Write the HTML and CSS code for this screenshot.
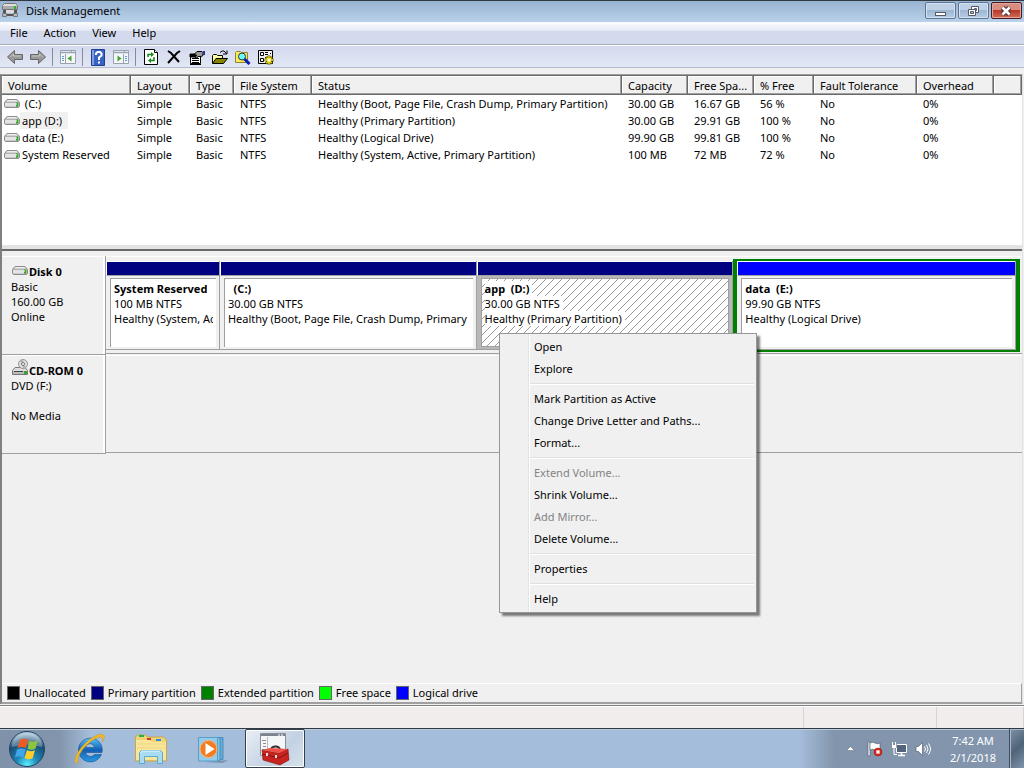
FILE: index.html
```
<!DOCTYPE html>
<html lang="en">
<head>
    <meta charset="UTF-8">
    <meta name="viewport" content="width=device-width, initial-scale=1.0">
    <title>Disk Management</title>
    <link rel="stylesheet" href="styles.css">
</head>
<body>
    <svg class="defs" aria-hidden="true">
        <defs>
            <linearGradient id="driveTop" x1="0" y1="0" x2="0" y2="1">
                <stop offset="0" stop-color="#fff"/>
                <stop offset="1" stop-color="#b4b4b4"/>
            </linearGradient>
            <symbol id="drive" viewBox="0 0 16 9">
                <path d="M3 .5h10l2.500 3v4l-1 1h-13l-1-1v-4z" fill="#b0b0b0" stroke="#8c8c8c"/>
                <path d="M3.500 1h9l2 2.500h-13z" fill="url(#driveTop)"/>
                <path d="M1 4h11v3.500h-10.500l-.5-.5z" fill="#e4e4e4"/>
                <path d="M12 3.500h2v4h-2z" fill="#2fa82f"/>
                <path d="M12 4h1v2h-1z" fill="#80e860"/>
            </symbol>
        </defs>
    </svg>

    <div class="window">
        <header class="titlebar">
            <svg class="app-icon" width="18" height="16" viewBox="0 0 18 16">
                <path d="M3.500 1.500h11l2 2v4h-15v-4z" fill="#ddd" stroke="#777"/>
                <path d="M2 4h14v3h-14z" fill="#aaa"/>
                <path d="M13 4h2v3h-2z" fill="#28b428"/>
                <path d="M2 8h14v3h-14z" fill="#555"/>
                <path d="M5 8h8v3h-8z" fill="#ddd"/>
                <path d="M1.500 11.500h4v3h-4zM12.500 11.500h4v3h-4z" fill="#bbb" stroke="#777"/>
                <path d="M6 12h6v2h-6z" fill="#555"/>
            </svg>
            <h1>Disk Management</h1>
            <div class="win-buttons">
                <button aria-label="Minimize">
                    <svg width="28" height="14" viewBox="0 0 28 14"><rect x="9.500" y="8.500" width="10" height="3" fill="#fff" stroke="#555a66"/></svg>
                </button>
                <button aria-label="Restore">
                    <svg width="28" height="14" viewBox="0 0 28 14"><path d="M12.500 2.500h7v6h-7z" fill="#fff" stroke="#555a66"/><path d="M15.500 4.500h2v2h-2z" fill="#a5bdd8" stroke="#555a66"/><path d="M9.500 5.500h7v6h-7z" fill="#fff" stroke="#555a66"/><path d="M11.500 7.500h3v2h-3z" fill="#a5bdd8" stroke="#555a66"/></svg>
                </button>
                <button class="close" aria-label="Close">
                    <svg width="28" height="14" viewBox="0 0 28 14"><path d="M10.500 3.500l7 7m0-7l-7 7" stroke="#52353a" stroke-width="5"/><path d="M10.500 3.500l7 7m0-7l-7 7" stroke="#fff" stroke-width="2.600"/></svg>
                </button>
            </div>
        </header>

        <nav class="menubar">
            <button>File</button>
            <button>Action</button>
            <button>View</button>
            <button>Help</button>
        </nav>

        <div class="toolbar">
            <button aria-label="Back"><svg width="18" height="16" viewBox="0 0 18 16"><path d="M1.500 8l7-6.500v4h8v5h-8v4z" fill="#999" stroke="#666"/><path d="M4 8l3.500-3v2h7.500" fill="none" stroke="#c4c4c4"/></svg></button>
            <button aria-label="Forward"><svg width="18" height="16" viewBox="0 0 18 16"><path d="M16.500 8l-7-6.500v4h-8v5h8v4z" fill="#999" stroke="#666"/><path d="M14 8l-3.500-3v2h-7.500" fill="none" stroke="#c4c4c4"/></svg></button>
            <span class="divider"></span>
            <button aria-label="Show console tree">
                <svg width="16" height="14" viewBox="0 0 16 14"><path d="M.5.5h15v13h-15z" fill="#f4f6fa" stroke="#9aa2ae"/><path d="M1 1h14v3h-14z" fill="#9aa2ae"/><path d="M1 1.500h10M12 1.500h3M1 3.500h14" stroke="#dde3ee"/><path d="M5.500 4v9" stroke="#9aa2ae"/><path d="M2 6.500h2M2 8.500h2M2 10.500h2" stroke="#5c9ddb"/><path d="M11.500 5.500v6l-4-3z" fill="#43a428"/></svg>
            </button>
            <span class="divider"></span>
            <button aria-label="Help">
                <svg width="14" height="17" viewBox="0 0 14 17"><path d="M.5.5h13v16h-13z" fill="#3863c5" stroke="#233f91"/><path d="M1 1h2v15h-2z" fill="#7fa0e0"/><path d="M5 6V4.500L6.500 3h2.500l1.500 1.500v2l-2.500 2V11M8 12.500v2" fill="none" stroke="#fff" stroke-width="2"/></svg>
            </button>
            <button aria-label="Show action pane">
                <svg width="16" height="14" viewBox="0 0 16 14"><path d="M.5.5h15v13h-15z" fill="#f4f6fa" stroke="#9aa2ae"/><path d="M1 1h14v3h-14z" fill="#9aa2ae"/><path d="M1 1.500h10M12 1.500h3M1 3.500h14" stroke="#dde3ee"/><path d="M10.500 4v9" stroke="#9aa2ae"/><path d="M12 6.500h2M12 8.500h2M12 10.500h2" stroke="#5c9ddb"/><path d="M4.500 5.500v6l4-3z" fill="#43a428"/></svg>
            </button>
            <span class="divider"></span>
            <button aria-label="Refresh">
                <svg width="14" height="16" viewBox="0 0 14 16"><path d="M.5.5h10l3 3v12h-13z" fill="#fff" stroke="#000"/><path d="M10.500.5v3h3" fill="#fff" stroke="#000"/><path d="M4 8V5.500h4M10 8v3.500h-4" fill="none" stroke="#128912" stroke-width="1.500"/><path d="M7 3l3 2.500-3 2.500zM7 9l-3 2.500 3 2.500z" fill="#128912"/></svg>
            </button>
            <button aria-label="Delete">
                <svg width="14" height="14" viewBox="0 0 14 14"><path d="M1 1l3 2 8 9M13 1l-3 2-9 10" fill="none" stroke="#000" stroke-width="2"/></svg>
            </button>
            <button aria-label="Properties">
                <svg width="16" height="15" viewBox="0 0 16 15"><path d="M1.500 4.500h10v9h-10z" fill="#fff" stroke="#000"/><path d="M1 4h7v3h-7zM1 14.500h11" fill="#000" stroke="#000"/><path d="M3 8.500h7M3 10.500h7M3 12.500h7" stroke="#000"/><path d="M5 4.500l3-3h5l1 1v3l-2 1h-3l-1 1.500h-2l1.500-3z" fill="#999" stroke="#000"/><path d="M14 1h2v4h-2z" fill="#24369a"/></svg>
            </button>
            <button aria-label="Open">
                <svg width="16" height="15" viewBox="0 0 16 15"><path d="M.5 13V5.500l1-1h3l1 1h5V8" fill="#ffffa0" stroke="#000"/><path d="M.5 13.500l3.500-5h11.500l-4 5z" fill="#858500" stroke="#000"/><path d="M8 2.500l2-1.500h2l2.500 2.500M15 .5v3.500h-4" fill="none" stroke="#000"/></svg>
            </button>
            <button aria-label="Find">
                <svg width="16" height="15" viewBox="0 0 16 15"><path d="M.5 12.500v-10l1-1h4l1 1h6v10z" fill="#ffe95a" stroke="#8c8442"/><circle cx="7" cy="6.500" r="3.500" fill="#6ff" stroke="#333"/><path d="M9.500 9l5 5" stroke="#0a1fb0" stroke-width="3"/></svg>
            </button>
            <button aria-label="Customize view">
                <svg width="16" height="15" viewBox="0 0 16 15"><path d="M.5.5h14v13h-14z" fill="#eee" stroke="#000"/><path d="M2.500 2.500h3v3h-3zM2.500 8.500h3v3h-3z" fill="#fff" stroke="#000"/><path d="M7 2.500h3M7 4.500h3M12 3.500h1M7 7.500h2" stroke="#000"/><path d="M11 5.500v9M6.500 10h9M8 7l6 6.500M14 7l-6 6.500" stroke="#5a5200" stroke-width="2.600"/><path d="M11 6v8M7 10h8M8.500 7.500l5 5.500M13.500 7.500l-5 5.500" stroke="#f0de20" stroke-width="1.400"/><circle cx="11" cy="10" r="1.500" fill="#fff"/></svg>
            </button>
        </div>

        <main class="content">
            <section class="volume-list">
                <table>
                    <colgroup>
                        <col class="c-volume"><col class="c-layout"><col class="c-type"><col class="c-fs"><col class="c-status"><col class="c-size"><col class="c-size"><col class="c-pct"><col class="c-fault"><col class="c-over"><col>
                    </colgroup>
                    <thead>
                        <tr><th>Volume</th><th>Layout</th><th>Type</th><th>File System</th><th>Status</th><th>Capacity</th><th>Free Spa...</th><th>% Free</th><th>Fault Tolerance</th><th>Overhead</th><th></th></tr>
                    </thead>
                    <tbody>
                        <tr><td><svg class="drive" width="16" height="9"><use href="#drive"/></svg><span>&nbsp;(C:)</span></td><td>Simple</td><td>Basic</td><td>NTFS</td><td>Healthy (Boot, Page File, Crash Dump, Primary Partition)</td><td>30.00 GB</td><td>16.67 GB</td><td>56 %</td><td>No</td><td>0%</td><td></td></tr>
                        <tr><td><svg class="drive" width="16" height="9"><use href="#drive"/></svg><span class="selected">app (D:)</span></td><td>Simple</td><td>Basic</td><td>NTFS</td><td>Healthy (Primary Partition)</td><td>30.00 GB</td><td>29.91 GB</td><td>100 %</td><td>No</td><td>0%</td><td></td></tr>
                        <tr><td><svg class="drive" width="16" height="9"><use href="#drive"/></svg><span>data (E:)</span></td><td>Simple</td><td>Basic</td><td>NTFS</td><td>Healthy (Logical Drive)</td><td>99.90 GB</td><td>99.81 GB</td><td>100 %</td><td>No</td><td>0%</td><td></td></tr>
                        <tr><td><svg class="drive" width="16" height="9"><use href="#drive"/></svg><span>System Reserved</span></td><td>Simple</td><td>Basic</td><td>NTFS</td><td>Healthy (System, Active, Primary Partition)</td><td>100 MB</td><td>72 MB</td><td>72 %</td><td>No</td><td>0%</td><td></td></tr>
                    </tbody>
                </table>
            </section>

            <section class="disks">
                <div class="disk">
                    <div class="disk-label">
                        <h2><svg width="16" height="9"><use href="#drive"/></svg>Disk 0</h2>
                        <p>Basic</p>
                        <p>160.00 GB</p>
                        <p>Online</p>
                    </div>
                    <div class="volumes">
                        <div class="volume reserved">
                            <div class="stripe"></div>
                            <div class="info"><b>System Reserved</b><span>100 MB NTFS</span><span>Healthy (System, Active, Primary Partition)</span></div>
                        </div>
                        <div class="volume">
                            <div class="stripe"></div>
                            <div class="info"><b>&nbsp; (C:)</b><span>30.00 GB NTFS</span><span>Healthy (Boot, Page File, Crash Dump, Primary Partition)</span></div>
                        </div>
                        <div class="volume active">
                            <div class="stripe"></div>
                            <div class="info"><b>app &nbsp;(D:)</b><span>30.00 GB NTFS</span><span>Healthy (Primary Partition)</span></div>
                        </div>
                        <div class="extended">
                            <div class="volume logical">
                                <div class="stripe"></div>
                                <div class="info"><b>data &nbsp;(E:)</b><span>99.90 GB NTFS</span><span>Healthy (Logical Drive)</span></div>
                            </div>
                        </div>
                    </div>
                </div>
                <div class="disk">
                    <div class="disk-label cdrom">
                        <h2>
                            <svg width="16" height="16" viewBox="0 0 16 16"><path d="M3 8.500h10l2.500 3v4h-15v-4z" fill="#ddd" stroke="#777"/><path d="M1 12h11v3h-11z" fill="#bbb"/><path d="M2 12.500h9" stroke="#444"/><path d="M12 12h3v3h-3z" fill="#2fa82f"/><circle cx="11" cy="5" r="4.500" fill="#ddd" stroke="#999"/><path d="M11 5l-3-3 3-1zM11 5l3 3-3 1z" fill="#aaa"/><circle cx="11" cy="5" r="1.500" fill="#fff" stroke="#777"/></svg>CD-ROM 0
                        </h2>
                        <p>DVD (F:)</p>
                        <p>&nbsp;</p>
                        <p>No Media</p>
                    </div>
                    <div class="volumes"></div>
                </div>
            </section>

            <ul class="legend">
                <li class="unallocated">Unallocated</li>
                <li class="primary">Primary partition</li>
                <li class="ext">Extended partition</li>
                <li class="free">Free space</li>
                <li class="log">Logical drive</li>
            </ul>
        </main>

        <footer class="statusbar"><span></span><span></span><span></span></footer>
    </div>

    <div class="context-menu" role="menu">
        <button role="menuitem">Open</button>
        <button role="menuitem">Explore</button>
        <hr>
        <button role="menuitem">Mark Partition as Active</button>
        <button role="menuitem">Change Drive Letter and Paths...</button>
        <button role="menuitem">Format...</button>
        <hr>
        <button role="menuitem" disabled>Extend Volume...</button>
        <button role="menuitem">Shrink Volume...</button>
        <button role="menuitem" disabled>Add Mirror...</button>
        <button role="menuitem">Delete Volume...</button>
        <hr>
        <button role="menuitem">Properties</button>
        <hr>
        <button role="menuitem">Help</button>
    </div>

    <div class="taskbar">
        <button class="start" aria-label="Start">
            <svg width="38" height="38" viewBox="0 0 38 38">
                <defs>
                    <radialGradient id="orb" cx=".5" cy=".95" r=".9">
                        <stop offset="0" stop-color="#5ff0ff"/>
                        <stop offset=".35" stop-color="#1b87b8"/>
                        <stop offset=".75" stop-color="#1c4b72"/>
                        <stop offset="1" stop-color="#a9c5d8"/>
                    </radialGradient>
                </defs>
                <circle cx="19" cy="19" r="17.500" fill="url(#orb)" stroke="#23435f"/>
                <path d="M4 17a15 14 0 0 1 30 0q-15-5-30 0z" fill="#fff" opacity=".3"/>
                <path d="M12 10q4-2.500 8 0l-2 8q-4-2-8.500 0z" fill="#ee5a24"/>
                <path d="M21.500 10.500q4 2.500 8.500 0l-2.500 8q-4 2.500-8 0z" fill="#8cc63c"/>
                <path d="M9 19.500q4-2 8.500 0l-2.300 8q-4-2.500-8.200 0z" fill="#42a5ea"/>
                <path d="M19 20q4 2.500 8 0l-2.200 8q-4 2.500-8.300 0z" fill="#ffcc29"/>
            </svg>
        </button>
        <button class="task" aria-label="Internet Explorer">
            <svg width="34" height="34" viewBox="0 0 34 34">
                <defs>
                    <linearGradient id="ieBlue" x1="0" y1="0" x2="0" y2="1">
                        <stop offset="0" stop-color="#58c4f5"/>
                        <stop offset=".5" stop-color="#125fb5"/>
                        <stop offset="1" stop-color="#279be0"/>
                    </linearGradient>
                </defs>
                <path d="M18 6a12 12 0 0 1 12 14.500H13.500q1 4 5 4 2.500 0 4-2h7A12 12 0 1 1 18 6zM13.500 15.500h9q-1-4-4.500-4t-4.500 4z" fill="url(#ieBlue)" stroke="#174f8f" stroke-width=".6"/>
                <path d="M7 31C1 32 2 25 9 16 17 6 28 0 31.500 3q2 2-1 7 1-5-2-5C23 5 13 13 9 20q-6 9-2 11z" fill="#f5b921" stroke="#c99822" stroke-width=".5"/>
            </svg>
        </button>
        <button class="task" aria-label="Windows Explorer">
            <svg width="34" height="34" viewBox="0 0 34 34">
                <path d="M1.500 5l2-2h8l2 2h16l3 3v21h-31z" fill="#f0d373" stroke="#c9a84c"/>
                <path d="M5 3h5v2H5z" fill="#22b14c"/><path d="M13 6h4v2h-4z" fill="#d9382e"/><path d="M22 7h5v2h-5z" fill="#2e8ee0"/>
                <path d="M2 8h13l3 2h14v18H2z" fill="#f9e69b"/>
                <path d="M3 12h28M3 16h28" stroke="#efd581"/>
                <path d="M5.500 31.500v-11l2-2h19l2 2v11h-5v-7h-13v7z" fill="#a8dcf3" stroke="#5aaad0"/>
                <path d="M7 21l1-2h18" fill="none" stroke="#e7f9ff"/>
            </svg>
        </button>
        <button class="task" aria-label="Media Player">
            <svg width="34" height="34" viewBox="0 0 34 34">
                <path d="M8 30l24-2-5 3z" fill="#7c94b0"/>
                <path d="M9 5.500h18v22H9z" fill="#62abd4" stroke="#4a8fbd"/>
                <path d="M6 5.500h18v23H6z" fill="#80c3e4" stroke="#4a8fbd"/>
                <path d="M2.500 5.500h19v23.500h-19z" fill="#93cbe8" stroke="#599ec8"/>
                <circle cx="12.500" cy="17" r="8.500" fill="#f47c20" stroke="#f9b47c"/>
                <path d="M9.500 11l9 6-9 6z" fill="#fff"/>
            </svg>
        </button>
        <button class="task current" aria-label="Disk Management">
            <svg width="34" height="34" viewBox="0 0 34 34">
                <path d="M2.500 1.500h25v22h-25z" fill="#f5f6f8" stroke="#8b8f96"/>
                <path d="M3 2h24v2H3z" fill="#7e848d"/><path d="M20 3h2M23 3h2" stroke="#fff"/>
                <path d="M9.500 5v18" stroke="#bbb"/><path d="M4 8.500h4M5 11.500h3M5 14.500h3M4 17.500h4" stroke="#8b8f96"/>
                <path d="M13 18q0-3 4-3.500t5 3" fill="none" stroke="#303030" stroke-width="2"/>
                <path d="M4 18l17 3 9-4 1 11-9 5-17-5z" fill="#c8231e" stroke="#7d1414" stroke-width=".6"/>
                <path d="M4 18l8-2 18 1-9 4z" fill="#ed5148"/><path d="M4 22l17 4 9-5" fill="none" stroke="#7d1414"/><path d="M8 21h2v3h-2zM17 23h2v3h-2z" fill="#ddd"/>
            </svg>
        </button>
        <div class="tray">
            <button aria-label="Show hidden icons"><svg width="9" height="5" viewBox="0 0 9 5"><path d="M.5 4.500l4-4 4 4z" fill="#fff" stroke="#5c6c80" stroke-width=".5"/></svg></button>
            <button aria-label="Action Center">
                <svg width="16" height="16" viewBox="0 0 16 16"><path d="M1 1h2v14h-2z" fill="#fff" stroke="#44546a" stroke-width=".6"/><path d="M3 2q3-1.500 5 0t5 0v7q-3 1.500-5 0t-5 0z" fill="#fff" stroke="#44546a" stroke-width=".6"/><circle cx="11" cy="11" r="4" fill="#d8281c" stroke="#8e1811" stroke-width=".5"/><path d="M9.500 9.500l3 3m0-3l-3 3" stroke="#fff" stroke-width="1.600"/></svg>
            </button>
            <button aria-label="Network">
                <svg width="16" height="16" viewBox="0 0 16 16"><path d="M5.500 3.500h10v8h-10z" fill="#53657c" stroke="#fff"/><path d="M10.500 12v2M7 14.500h7" stroke="#fff" stroke-width="1.500"/><path d="M.5 3.500h5v3l-1 1h-3l-1-1z" fill="#fff" stroke="#3e4e63" stroke-width=".5"/><path d="M1.500 1v3M4.500 1v3M3 7v6.500h3" fill="none" stroke="#fff"/></svg>
            </button>
            <button aria-label="Volume">
                <svg width="16" height="16" viewBox="0 0 16 16"><path d="M1 5.500h2.500l4-4v13l-4-4H1z" fill="#fff" stroke="#44546a" stroke-width=".6"/><path d="M9.500 5.500q2 2.500 0 5M11.500 4q3 4 0 8M13.500 2.500q4 5.500 0 11" fill="none" stroke="#fff"/></svg>
            </button>
        </div>
        <div class="clock"><time>7:42 AM</time><time>2/1/2018</time></div>
        <button class="show-desktop" aria-label="Show desktop"></button>
    </div>
</body>
</html>
```
FILE: styles.css
```
* {
    box-sizing: border-box;
}
body {
    display: flex;
    flex-direction: column;
    min-height: 100vh;
    margin: 0;
    font: 11px/15px "Noto Sans", "Open Sans", sans-serif;
    color: #000;
    background: #f0f0f0;
}
button {
    font: inherit;
    color: inherit;
    background: none;
    border: none;
    padding: 0;
}
h1, h2, p, ul {
    margin: 0;
    padding: 0;
}
svg {
    display: block;
    flex: none;
}
.defs {
    position: absolute;
    width: 0;
    height: 0;
}
.window {
    flex: 1;
    display: flex;
    flex-direction: column;
}

/* title bar */
.titlebar {
    display: flex;
    height: 22px;
    border-top: 1px solid #303840;
    background: linear-gradient(#98b3d1, #b9d1ea);
}
.app-icon {
    margin: 1px 7px 0 1px;
}
.titlebar h1 {
    flex: 1;
    font-size: 11px;
    font-weight: normal;
    line-height: 20px;
}
.win-buttons {
    display: flex;
    gap: 2px;
    padding: 1px 2px 0 0;
}
.win-buttons button {
    width: 31px;
    height: 17px;
    border: 1px solid #5c7593;
    border-radius: 2px;
    box-shadow: inset 0 0 0 1px #d3e1f1;
    background: linear-gradient(#bdd0e6 50%, #9db7d3 50%, #b6cce5);
}
.win-buttons .close {
    border-color: #4a1a20;
    box-shadow: inset 0 0 0 1px #e2a69c;
    background: linear-gradient(#d98d80 50%, #b8382a 50%, #cf7058);
}

/* menu and tools */
.menubar {
    display: flex;
    height: 22px;
    padding: 0 0 2px 4px;
    background: linear-gradient(#fcfdff, #e6eaf6 38%, #d4daed 42%, #d4daed);
}
.menubar button {
    padding: 0 6px;
    margin-right: 4px;
}
.toolbar {
    display: flex;
    align-items: center;
    height: 24px;
    padding: 2px 0 0 3px;
    border-top: 1px solid #a8aeb8;
    border-bottom: 1px solid #b4bcd0;
    box-shadow: inset 0 1px #fff;
    background: linear-gradient(#d3d9ed, #e2e7f5);
}
.toolbar button {
    display: flex;
    justify-content: center;
    align-items: center;
    width: 23px;
    height: 20px;
}
.divider {
    width: 1px;
    height: 18px;
    margin: 0 3px;
    background: #858b98;
}

/* volume table */
.content {
    flex: 1;
    display: flex;
    flex-direction: column;
    margin: 6px 1px 0 0;
    border: 1px solid #a0a0a0;
    border-left: 2px solid #808080;
    border-right-color: #e3e3e3;
}
.volume-list {
    height: 176px;
    border-top: 1px solid #696969;
    border-bottom: 2px solid #696969;
    box-shadow: inset 0 -4px #e3e3e3;
    background: #fff;
}
table {
    width: 100%;
    table-layout: fixed;
    border-collapse: separate;
    border-spacing: 0;
}
.c-volume { width: 129px; }
.c-layout { width: 59px; }
.c-type { width: 44px; }
.c-fs { width: 78px; }
.c-status { width: 310px; }
.c-size { width: 66px; }
.c-pct { width: 60px; }
.c-fault { width: 103px; }
.c-over { width: 77px; }
th, td {
    padding: 0 0 0 6px;
    font-weight: normal;
    text-align: left;
    white-space: nowrap;
}
th {
    height: 19px;
    border-right: 1px solid #696969;
    border-bottom: 1px solid #696969;
    box-shadow: inset -1px -1px #a0a0a0, inset 1px 1px #fff;
    background: #f0f0f0;
}
td {
    height: 17px;
}
td:first-child {
    display: flex;
    align-items: center;
    padding-left: 2px;
}
td:first-child span {
    padding: 1px 6px 1px 2px;
}
.selected {
    background: #f0f0f0;
}

/* graphical view */
.disks {
    flex: 1;
    padding-top: 5px;
}
.disk {
    display: grid;
    grid-template-columns: 104px 1fr;
    height: 99px;
}
.disk-label {
    padding: 8px 0 0 9px;
    border: 1px solid #a0a0a0;
    border-width: 0 1px 1px 0;
    box-shadow: inset -2px 1px #fff;
}
.disk-label h2 {
    display: flex;
    font-size: 11px;
    line-height: 15px;
}
.disk-label h2 svg {
    margin: 2px 1px 0;
}
.cdrom h2 svg {
    margin-top: -4px;
}
.volumes {
    display: flex;
    padding: 3px 2px 2px 0;
    margin-bottom: 1px;
    border-bottom: 1px solid #a0a0a0;
    box-shadow: inset 0 1px #fff;
}
.volume {
    flex: 256;
    min-width: 0;
    display: flex;
    flex-direction: column;
    margin: 2px 0 1px;
    border: 1px solid #a0a0a0;
    border-width: 0 1px 1px 0;
}
.reserved {
    flex: 113;
}
.stripe {
    height: 15px;
    border: 1px solid #fff;
    border-right-width: 0;
    border-bottom-color: #a0a0a0;
    background: #000080;
}
.info {
    flex: 1;
    display: flex;
    flex-direction: column;
    align-items: flex-start;
    margin: 2px 3px 2px 4px;
    padding: 2px 3px 0;
    border: 1px solid #a0a0a0;
    border-width: 1px 0 0 1px;
    overflow: hidden;
    white-space: nowrap;
    background: #fff;
}
.info b, .info span {
    max-width: 100%;
    overflow: hidden;
}
.active {
    background: #b8b8b8;
}
.active .info {
    border-width: 1px;
    background: linear-gradient(135deg, transparent 46%, #999 46% 54%, transparent 54%) 0 0 / 8px 8px #fff;
}
.active b, .active span {
    padding-right: 3px;
    background: #fff;
}
.extended {
    flex: 279;
    display: flex;
    margin-bottom: -1px;
    border: 4px solid #008000;
    border-top-width: 2px;
    border-bottom-width: 2px;
}
.extended .volume {
    margin: 0;
    background: #f0f0f0;
}
.logical .stripe {
    background: #0000ff;
}

.legend {
    display: flex;
    height: 20px;
    padding-left: 5px;
    border-top: 1px solid #fff;
    border-right: 1px solid #a0a0a0;
    border-bottom: 1px solid #a0a0a0;
    list-style: none;
    line-height: 18px;
}
.legend li {
    display: flex;
    align-items: center;
    gap: 4px;
    margin-right: 5px;
}
.legend li::before {
    content: "";
    width: 11px;
    height: 12px;
    border: 1px solid #666;
    background: #000;
}
.legend .primary::before { background: #000080; }
.legend .ext::before { background: #008000; }
.legend .free::before { background: #00ff00; }
.legend .log::before { background: #0000ff; }

.statusbar {
    display: grid;
    grid-template-columns: 1fr 133px 87px;
    height: 23px;
    margin-top: 1px;
    border-top: 1px solid #808080;
    box-shadow: inset 0 1px #fff;
    background: #f0edec;
}
.statusbar span {
    margin-top: 1px;
    border-right: 1px solid #d5d5d5;
}

/* popup menu of the selected volume */
.context-menu {
    position: absolute;
    left: 499px;
    top: 333px;
    width: 258px;
    padding: 2px;
    border: 1px solid #979797;
    box-shadow: 3px 3px 2px rgba(0,0,0,0.5);
    background: linear-gradient(90deg, transparent 28px, #e2e3e3 28px 29px, #fff 29px 30px, transparent 30px) #f0f0f0;
}
.context-menu button {
    display: block;
    width: 100%;
    height: 22px;
    padding: 0 0 2px 32px;
    text-align: left;
}
.context-menu button:disabled {
    color: #838383;
}
.context-menu hr {
    height: 2px;
    margin: 3px 0 3px 28px;
    border: 0;
    border-top: 1px solid #e0e0e0;
    border-bottom: 1px solid #fff;
}

/* taskbar */
.taskbar {
    display: flex;
    height: 40px;
    border-top: 1px solid #303a46;
    box-shadow: inset 0 1px #bdcddd;
    background: linear-gradient(90deg, #7f92a9, #8295ac 60px, #a4bddb 90px, #a4bddb calc(100% - 224px), #8295ac calc(100% - 190px));
}
.start {
    width: 54px;
    padding: 0 8px;
}
.task {
    display: flex;
    justify-content: center;
    align-items: center;
    width: 60px;
    margin-right: 2px;
}
.start + .task {
    margin-left: 5px;
}
.current {
    border: 1px solid #35404c;
    border-radius: 2px;
    box-shadow: inset 0 0 0 1px #fff;
    background: linear-gradient(135deg, #e9eef5, #c2d1e3 60%, #d8e2ee);
}
.tray {
    display: flex;
    align-items: center;
    gap: 8px;
    margin-left: auto;
}
.tray button:first-child {
    margin-right: 4px;
}
.clock {
    display: flex;
    flex-direction: column;
    width: 78px;
    padding: 3px 0 0 6px;
    line-height: 17px;
    text-align: center;
    color: #fff;
}
.show-desktop {
    width: 15px;
    border: 1px solid #3f4d5e;
    border-width: 0 0 0 1px;
    box-shadow: inset 1px 1px #a9b9ca;
    background: linear-gradient(135deg, #8093a9, #4f6379 50%, #8094ab);
}
```
